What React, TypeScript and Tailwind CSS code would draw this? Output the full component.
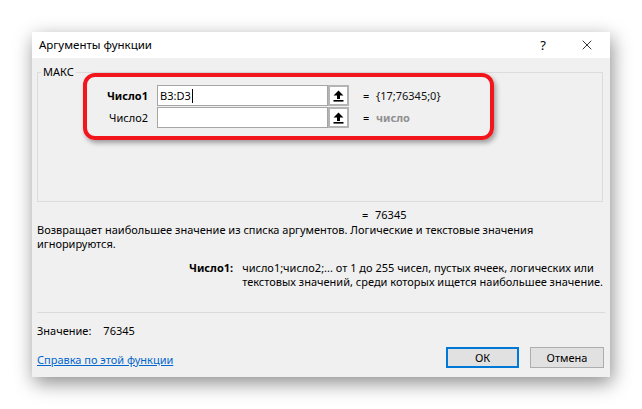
import { X } from "lucide-react"

// Small "select range" arrow used in the argument fields
function RangeIcon() {
  return (
    <svg width="11" height="12" viewBox="0 0 11 12">
      <path d="M5.5 0.5 L10.5 5.5 L7 5.5 L7 9 L4 9 L4 5.5 L0.5 5.5 Z" fill="#000" />
      <rect x="0.5" y="10" width="10" height="1.6" fill="#000" />
    </svg>
  )
}

function ArgRow({ label, value, bold, muted }: { label: string; value: string; bold?: boolean; muted?: boolean }) {
  return (
    <div className="flex items-center h-[21px]">
      <div className={`w-[61px] text-right ${bold ? "font-bold" : ""}`}>{label}</div>
      <div className="ml-[9px] flex h-[21px]">
        <div className="w-[171px] h-full bg-white border border-[#a5a5a5] flex items-center pl-[2px]">
          {value}
          {value && <span className="inline-block w-px h-[14px] bg-black ml-px" />}
        </div>
        <div className="w-[21px] h-full bg-white border-2 border-[#b4b4b4] flex items-center justify-center">
          <RangeIcon />
        </div>
      </div>
      <div className="ml-[14px] w-[13px]">=</div>
      <div className={muted ? "text-[#8f8f8f] font-bold" : "text-[#111]"}>{muted ? "число" : "{17;76345;0}"}</div>
    </div>
  )
}

export default function App() {
  return (
    <div className="w-[642px] h-[409px] bg-white pt-[32px] pl-[32px] font-['Noto_Sans',sans-serif] text-[11px] text-black leading-none whitespace-nowrap">
      <div className="w-[578px] h-[345px] flex flex-col bg-[#f0f0f0] shadow-[2px_6px_18px_rgba(0,0,0,0.45)]">
        {/* Title bar */}
        <div className="h-[26px] bg-white flex items-center pl-[7px] pr-[15px] shrink-0">
          <div className="text-[11.5px] flex-1">Аргументы функции</div>
          <div className="text-[13px] mr-[33px]">?</div>
          <X size={16} strokeWidth={1.2} className="text-black" />
        </div>

        {/* Body */}
        <div className="flex-1 flex flex-col pl-[5px] pr-[7px]">
          {/* Group box */}
          <div className="relative mt-[14px] h-[130px] border border-[#dcdcdc]">
            <span className="absolute -top-[7px] left-[3px] bg-[#f0f0f0] px-[2px]">МАКС</span>
            <div className="ml-[45px] w-[411px] border-[4px] border-[#f2151c] rounded-[12px] pt-[8px] pb-[8px] shadow-[2px_3px_5px_rgba(0,0,0,0.35)]">
              <ArgRow label="Число1" value="B3:D3" bold />
              <div className="h-px" />
              <ArgRow label="Число2" value="" muted />
            </div>
          </div>

          <div className="h-[24px] flex items-center pl-[325px]">
            <span className="w-[13px]">=</span>
            <span>76345</span>
          </div>

          <div className="leading-[14px] -mt-[3px]">
            Возвращает наибольшее значение из списка аргументов. Логические и текстовые значения
            <br />
            игнорируются.
          </div>

          <div className="flex mt-[10px] leading-[14px]">
            <div className="w-[199px] text-right font-bold">Число1:</div>
            <div className="ml-[9px]">
              число1;число2;... от 1 до 255 чисел, пустых ячеек, логических или
              <br />
              текстовых значений, среди которых ищется наибольшее значение.
            </div>
          </div>

          <div className="mt-[23px] h-px bg-[#dadada] mr-[-2px]" />

          <div className="mt-[12px] flex">
            <span>Значение:</span>
            <span className="ml-[12px]">76345</span>
          </div>

          <div className="mt-[11px] flex items-center justify-between">
            <a className="text-[#0066cc] underline mt-[4px]">Справка по этой функции</a>
            <div className="flex gap-[11px] mr-[-1px]">
              <button className="w-[73px] h-[21px] bg-[#e1e1e1] border-2 border-[#0078d7]">ОК</button>
              <button className="w-[74px] h-[21px] bg-[#e1e1e1] border border-[#adadad]">Отмена</button>
            </div>
          </div>
        </div>
      </div>
    </div>
  )
}
